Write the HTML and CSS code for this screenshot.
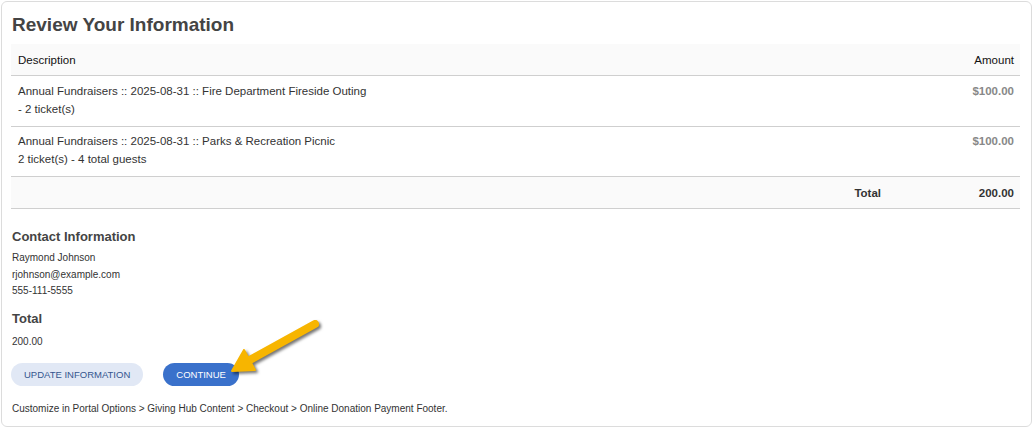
FILE: index.html
```html
<!DOCTYPE html>
<html lang="en">

<head>
    <meta charset="UTF-8">
    <meta name="viewport" content="width=device-width, initial-scale=1.0">
    <title>Review Your Information</title>
    <link rel="stylesheet" href="styles.css">
</head>

<body>

    <div class="card">
        <h1 class="title">Review Your Information</h1>

        <!-- Order summary -->
        <table class="summary">
            <thead>
                <tr>
                    <th class="desc">Description</th>
                    <th class="amount">Amount</th>
                </tr>
            </thead>
            <tbody>
                <tr>
                    <td class="desc">
                        Annual Fundraisers :: 2025-08-31 :: Fire Department Fireside Outing<br>
                        - 2 ticket(s)
                    </td>
                    <td class="amount price">$100.00</td>
                </tr>
                <tr>
                    <td class="desc">
                        Annual Fundraisers :: 2025-08-31 :: Parks &amp; Recreation Picnic<br>
                        2 ticket(s) - 4 total guests
                    </td>
                    <td class="amount price">$100.00</td>
                </tr>
            </tbody>
            <tfoot>
                <tr>
                    <td class="total-label">Total</td>
                    <td class="amount total-value">200.00</td>
                </tr>
            </tfoot>
        </table>

        <!-- Contact -->
        <div class="section">
            <h2>Contact Information</h2>
            <p>Raymond Johnson</p>
            <p>rjohnson@example.com</p>
            <p>555-111-5555</p>
        </div>

        <div class="section">
            <h2>Total</h2>
            <p>200.00</p>
        </div>

        <div class="actions">
            <button class="btn btn-light">UPDATE INFORMATION</button>
            <button class="btn btn-primary">CONTINUE</button>
        </div>

        <p class="footer-note">Customize in Portal Options &gt; Giving Hub Content &gt; Checkout &gt; Online Donation Payment Footer.</p>

        <!-- callout arrow pointing at continue -->
        <svg class="callout" width="110" height="75" viewBox="0 0 110 75">
            <line x1="95" y1="14" x2="28" y2="51" stroke="#f7b500" stroke-width="8" stroke-linecap="round" />
            <polygon points="12,61 35,60 24,40" fill="#f7b500" stroke="#f7b500" stroke-width="2" stroke-linejoin="round" />
        </svg>
    </div>

</body>

</html>
```

FILE: styles.css
```css
body {
    font-family: 'Liberation Sans', Arial, sans-serif;
    background-color: #fff;
    margin: 1px;
    color: #333;
}

.card {
    position: relative;
    height: 426px;
    box-sizing: border-box;
    border: 1px solid #dcdcdc;
    border-radius: 6px;
    padding: 0 11px 0 9px;
    overflow: hidden;
}

.title {
    font-size: 19px;
    font-weight: bold;
    color: #444;
    margin: 12px 0 8px 1px;
    line-height: 22px;
}

.summary {
    width: 100%;
    border-collapse: collapse;
    font-size: 11.5px;
}

.summary th {
    background-color: #fafafa;
    font-weight: normal;
    color: #111;
    height: 31px;
    padding: 0 6px 0 7px;
    border-bottom: 1px solid #cfcfcf;
    text-align: left;
}

.summary th.amount {
    width: 120px;
}

.summary td {
    padding: 6px 6px 8px 7px;
    line-height: 18px;
    vertical-align: top;
    border-bottom: 1px solid #cfcfcf;
    color: #333;
}

.summary tbody tr + tr td {
    padding-top: 5px;
}

.summary .amount {
    text-align: right;
}

.summary .price {
    color: #888;
    font-weight: bold;
}

.summary tfoot td {
    background-color: #fafafa;
    font-weight: bold;
    height: 31px;
    padding: 0 6px;
    vertical-align: middle;
    color: #333;
}

.summary .total-label {
    text-align: right;
}

.section {
    margin-left: 1px;
}

.section h2 {
    font-size: 13px;
    font-weight: bold;
    color: #444;
    margin: 20px 0 5px;
    line-height: 16px;
}

.section p {
    font-size: 10px;
    margin: 0;
    line-height: 16.5px;
    color: #333;
}

.section + .section h2 {
    margin-top: 11px;
    margin-bottom: 7px;
}

.actions {
    display: flex;
    gap: 20px;
    margin-top: 13px;
}

.btn {
    height: 23px;
    border: none;
    border-radius: 12px;
    font-family: inherit;
    font-size: 9.5px;
    padding: 0 13px;
    cursor: pointer;
}

.btn-light {
    background-color: #e1e8f5;
    color: #34558f;
}

.btn-primary {
    background-color: #3a71cb;
    color: #fff;
}

.footer-note {
    font-size: 10px;
    margin: 17px 0 0 1px;
    color: #333;
}

.callout {
    position: absolute;
    left: 218px;
    top: 308px;
    filter: drop-shadow(2px 2px 1.5px rgba(0, 0, 0, 0.55));
}
```
